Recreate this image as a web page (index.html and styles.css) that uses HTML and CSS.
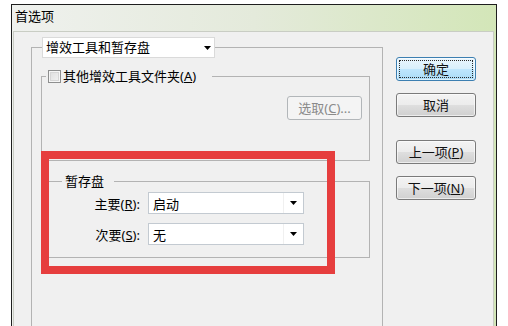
FILE: index.html
```html
<!DOCTYPE html>
<html lang="zh-CN">
<head>
<meta charset="utf-8">
<title>首选项</title>
<link rel="stylesheet" href="styles.css">
</head>
<body>
<div class="window">
  <div class="titlebar">首选项</div>
  <div class="client">
    <fieldset class="group main">
      <legend class="main-legend">
        <div class="dropdown">
          <span class="dd-text">增效工具和暂存盘</span>
          <svg class="arrow" width="7" height="4" viewBox="0 0 7 4"><path d="M0 0H7L3.5 4Z" fill="#000"/></svg>
        </div>
      </legend>

      <fieldset class="group plugins">
        <legend class="check-legend">
          <span class="legend-inner"><span class="checkbox"></span><span>其他增效工具文件夹(<u>A</u>)</span></span>
        </legend>
        <div class="choose-row">
          <button class="btn disabled" type="button">选取(<u>C</u>)...</button>
        </div>
      </fieldset>

      <fieldset class="group scratch">
        <legend class="text-legend">暂存盘</legend>
        <div class="rows">
          <label class="lbl">主要(<u>R</u>):</label>
          <div class="combo">
            <span class="combo-text">启动</span>
            <span class="combo-btn"><svg width="7" height="4" viewBox="0 0 7 4"><path d="M0 0H7L3.5 4Z" fill="#000"/></svg></span>
          </div>
          <label class="lbl">次要(<u>S</u>):</label>
          <div class="combo">
            <span class="combo-text">无</span>
            <span class="combo-btn"><svg width="7" height="4" viewBox="0 0 7 4"><path d="M0 0H7L3.5 4Z" fill="#000"/></svg></span>
          </div>
        </div>
      </fieldset>
    </fieldset>

    <div class="buttons">
      <button class="btn default" type="button">确定</button>
      <button class="btn" type="button">取消</button>
      <button class="btn spaced" type="button">上一项(<u>P</u>)</button>
      <button class="btn" type="button">下一项(<u>N</u>)</button>
    </div>

    <div class="annotation"></div>
  </div>
</div>
</body>
</html>
```

FILE: styles.css
```css
* { box-sizing: border-box; }

html, body {
  margin: 0;
  padding: 0;
  background: #fff;
  overflow: hidden;
}

body {
  width: 508px;
  height: 326px;
  font-family: "Noto Sans", "Noto Sans CJK SC", sans-serif;
  font-size: 13px;
  color: #000;
}

.window {
  margin: 4px 0 0 11px;
  width: 486px;
  height: 322px;
  border: 1px solid #1e1e1e;
  border-bottom: none;
  padding: 0 2px 0 1px;
  background: linear-gradient(to right, #eff1ee 0%, #e4eadb 50%, #d3e6b8 100%);
  display: flex;
  flex-direction: column;
}

.titlebar {
  height: 26px;
  padding: 2px 0 0 2px;
  line-height: 18px;
  font-size: 13px;
  flex: none;
}

.client {
  position: relative;
  flex: 1;
  background: #f0f0f0;
  border: 1px solid #c9cdc4;
  border-bottom: none;
  display: flex;
  align-items: flex-start;
  padding: 5px 0 0 17px;
}

.group {
  margin: 0;
  min-width: 0;
  border: 1px solid #b3b3b3;
}

.group legend {
  padding: 0;
}

/* main group */
.main {
  width: 352px;
  height: 289px;
  padding: 11px 12px 0 9px;
  border-bottom: none;
}

.main-legend {
  margin-left: 1px;
}

.dropdown {
  width: 173px;
  height: 21px;
  background: #fff;
  border: 1px solid #dadada;
  display: flex;
  align-items: center;
  padding: 0 3px 0 3px;
  line-height: 19px;
}

.dd-text { flex: 1; }

.arrow { display: block; }

/* plugins group */
.plugins {
  padding: 13px 7px 40px 4px;
}

.check-legend {
  padding: 0 16px 0 2px !important;
}

.legend-inner {
  display: flex;
  align-items: center;
  height: 14px;
  line-height: 14px;
}

.checkbox {
  width: 13px;
  height: 13px;
  margin-right: 2px;
  border: 1px solid #8e8f8f;
  background: linear-gradient(135deg, #dcdcdc 0%, #f4f4f4 100%);
  box-shadow: inset 0 0 0 1px #f6f6f6, inset 0 0 0 2px #d6d6d6;
}

.choose-row {
  display: flex;
  justify-content: flex-end;
}

/* scratch group */
.scratch {
  margin-top: 13px;
  padding: 4px 0 12px 20px;
}

.text-legend {
  padding: 0 10px 0 3px !important;
  line-height: 14px;
}

.rows {
  display: grid;
  grid-template-columns: 78px 156px;
  column-gap: 8px;
  row-gap: 9px;
}

.lbl {
  text-align: right;
  line-height: 24px;
  height: 22px;
  white-space: nowrap;
}

.combo {
  height: 22px;
  background: #fff;
  border: 1px solid #c3cad1;
  display: flex;
  align-items: stretch;
}

.combo-text {
  flex: 1;
  padding-left: 4px;
  line-height: 22px;
}

.combo-btn {
  width: 20px;
  border-left: 1px solid #f0f0f0;
  display: flex;
  align-items: center;
  justify-content: center;
}

/* buttons */
.buttons {
  margin: 20px 0 0 13px;
  width: 80px;
  display: flex;
  flex-direction: column;
  gap: 12px;
}

.btn {
  font: inherit;
  font-size: 13px;
  padding: 0;
  width: 80px;
  height: 24px;
  line-height: 21px;
  border: 1px solid #7a7a7a;
  border-radius: 3px;
  background: linear-gradient(#f3f3f3 0%, #ececec 48%, #dedede 52%, #d0d0d0 100%);
  color: #111;
  box-shadow: inset 0 0 0 1px rgba(255,255,255,0.6);
}

.btn.default {
  border-color: #3c7fb1;
  background: linear-gradient(#eaf6fd 0%, #d9f0fc 48%, #bee6fd 52%, #a9dbf6 100%);
  outline: 1px dotted #2a2a2a;
  outline-offset: -4px;
}

.btn.spaced {
  margin-top: 11px;
}

.btn.disabled {
  width: 75px;
  border-color: #b2b6b9;
  background: #f4f4f4;
  color: #8a8a8a;
  box-shadow: none;
}

/* red annotation frame drawn over the screenshot */
.annotation {
  position: absolute;
  left: 27px;
  top: 119px;
  width: 294px;
  height: 123px;
  border: 8px solid #e63e3e;
}
```
